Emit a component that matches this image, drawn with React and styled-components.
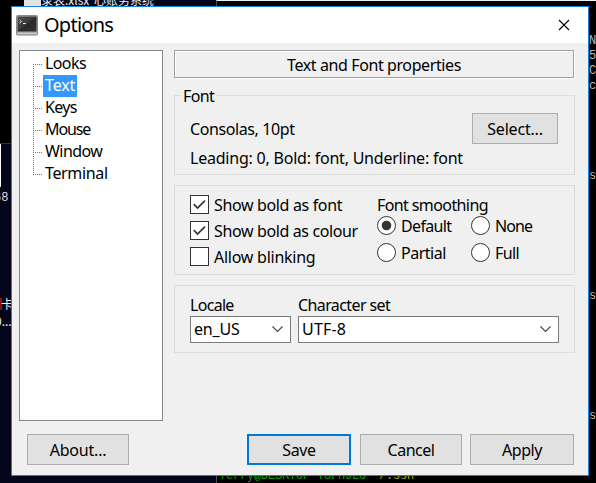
import React from 'react';
import styled, { createGlobalStyle } from 'styled-components';

const GlobalStyle = createGlobalStyle`
  * { box-sizing: border-box; }
  html, body { margin: 0; padding: 0; background: #000; overflow: hidden; }
`;

const Desktop = styled.div`
  position: relative;
  width: 596px;
  height: 483px;
  overflow: hidden;
  background: #000;
  color: #000;
  font: 16px/20px "Noto Sans", "Open Sans", sans-serif;
`;

/* Windows lying behind the dialog */
const BackWindow = styled.div`
  position: absolute;
  left: ${(p) => p.$x}px;
  top: ${(p) => p.$y}px;
  width: ${(p) => p.$w}px;
  height: ${(p) => p.$h}px;
  overflow: hidden;
  background: ${(p) => p.$bg};
  border-left: ${(p) => (p.$edge ? '1px solid #4a4a4a' : '0')};
  border-top: ${(p) => (p.$top ? `1px solid ${p.$top}` : '0')};
`;

const BackText = styled.span`
  position: absolute;
  left: ${(p) => p.$x}px;
  top: ${(p) => p.$y}px;
  white-space: pre;
  color: ${(p) => p.$color || '#b4b4b4'};
  font: ${(p) => p.$size || 12}px/15px ${(p) =>
    p.$cjk ? '"Noto Sans CJK SC", sans-serif' : '"Liberation Mono", monospace'};
  letter-spacing: ${(p) => p.$ls || 0}px;
`;

const Dialog = styled.main`
  position: absolute;
  left: 11px;
  top: 6px;
  width: 578px;
  height: 470px;
  display: flex;
  flex-direction: column;
  background: #f0f0f0;
  border: 1px solid #1883d7;
`;

const TitleBar = styled.header`
  height: 36px;
  flex: none;
  display: flex;
  align-items: center;
  padding: 0 18px 0 4px;
  background: #fff;
`;

const Title = styled.h1`
  flex: 1;
  margin: -1px 0 0 6px;
  font-size: 20px;
  line-height: 26px;
  font-weight: 400;
  letter-spacing: -0.75px;
`;

const CloseButton = styled.button`
  display: flex;
  padding: 0;
  border: 0;
  background: none;
`;

const Body = styled.div`
  display: flex;
  gap: 11px;
  padding: 7px 13px 0 7px;
`;

const Tree = styled.ul`
  width: 144px;
  height: 371px;
  flex: none;
  margin: 0;
  padding: 2px 0 0 13px;
  list-style: none;
  background: #fff;
  border: 1px solid #828790;
`;

const Branch = styled.li`
  display: flex;
  align-items: center;
  height: 22px;
`;

const TreeLines = styled.svg`
  flex: none;
  width: 10px;
  height: 22px;
`;

const Text = styled.span`
  display: inline-block;
  white-space: pre;
  letter-spacing: ${(p) => p.$ls ?? -0.4}px;
`;

const BranchName = styled(Text)`
  height: 22px;
  line-height: 21px;
  padding: 0 2px;
  background: ${(p) => (p.$selected ? '#3399ff' : 'transparent')};
  color: ${(p) => (p.$selected ? '#fff' : '#000')};
`;

const Page = styled.section`
  width: 401px;
  display: flex;
  flex-direction: column;
`;

const PageHeading = styled.h2`
  width: 400px;
  height: 28px;
  margin: 0;
  border: 1px solid #a0a0a0;
  box-shadow: 1px 1px 0 #fff, inset 1px 1px 0 #fff;
  font-size: 16px;
  font-weight: 400;
  line-height: 29px;
  text-align: center;
`;

const Group = styled.fieldset`
  height: ${(p) => p.$h}px;
  min-width: 0;
  margin: ${(p) => p.$gap}px 0 0;
  padding: 0 15px;
  border: 1px solid #dcdcdc;
`;

const FontGroup = styled.section`
  display: flex;
  flex-direction: column;
  height: 89px;
  margin-top: 8px;
`;

const Legend = styled.div`
  display: flex;
  align-items: center;
  height: 20px;
  gap: 2px;
  line-height: 20px;
  &::before, &::after {
    content: '';
    align-self: flex-start;
    height: 11px;
    margin-top: 9px;
    border-top: 1px solid #dcdcdc;
  }
  &::before { width: 6px; border-left: 1px solid #dcdcdc; }
  &::after { flex: 1; border-right: 1px solid #dcdcdc; }
`;

const FontDetails = styled.div`
  flex: 1;
  padding: 7px 16px 0 15px;
  border: 1px solid #dcdcdc;
  border-top: 0;
`;

const FontRow = styled.div`
  display: flex;
  justify-content: space-between;
  align-items: center;
  height: 31px;
  margin-bottom: 4px;
`;

const Button = styled.button`
  width: ${(p) => p.$w}px;
  height: 31px;
  padding: 1px 0 0;
  border: ${(p) => (p.$primary ? '2px solid #0078d7' : '1px solid #adadad')};
  background: #e1e1e1;
  color: #000;
  font: inherit;
  line-height: 20px;
`;

const Columns = styled.div`
  display: grid;
  grid-template-columns: ${(p) => p.$cols};
  column-gap: ${(p) => p.$gap || 0}px;
`;

const Checks = styled.div`
  display: flex;
  flex-direction: column;
  gap: 7px;
  padding-top: 9px;
`;

const Choice = styled.label`
  display: flex;
  align-items: center;
  height: 19px;
  gap: 5px;
`;

const CheckBox = styled.svg`
  width: 19px;
  height: 19px;
  flex: none;
`;

const Smoothing = styled.div`
  padding-top: 9px;
`;

const Radios = styled.div`
  display: grid;
  grid-template-columns: 94px auto;
  row-gap: 8px;
  margin-top: 1px;
`;

const Field = styled.div`
  display: flex;
  flex-direction: column;
  gap: 1px;
  padding-top: 9px;
`;

const Combo = styled.div`
  display: flex;
  align-items: center;
  justify-content: space-between;
  height: 27px;
  padding: 0 6px 1px 3px;
  border: 1px solid #7a7a7a;
  background: #fff;
`;

const Actions = styled.footer`
  display: flex;
  padding: 13px 14px 0 15px;
`;

const Spacer = styled.div`
  width: ${(p) => p.$w}px;
`;

function TerminalIcon() {
  return (
    <svg width="22" height="21" viewBox="0 0 22 21">
      <defs>
        <linearGradient id="screen" x1="0" y1="0" x2="1" y2="1">
          <stop offset="0" stopColor="#505050" />
          <stop offset=".48" stopColor="#393939" />
          <stop offset=".5" stopColor="#292929" />
          <stop offset="1" stopColor="#303030" />
        </linearGradient>
      </defs>
      <rect x=".5" y=".5" width="21" height="19.5" rx="1" fill="#aaa" stroke="#8a8a8a" />
      <rect x="1.5" y="1.5" width="19" height="15" fill="url(#screen)" />
      <path d="M3.5 5l2 1.6-2 1.6M7 8.5h3" fill="none" stroke="#ddd" strokeWidth="1" />
      <path d="M1 18.5h20" stroke="#d0d0d0" />
    </svg>
  );
}

function Check({ label, checked, ls }) {
  return (
    <Choice>
      <CheckBox viewBox="0 0 19 19">
        <rect x=".5" y=".5" width="18" height="18" fill="#fff" stroke="#333" />
        {checked && <path d="M3.8 9.2l3.7 3.8L15 5.6" fill="none" stroke="#333" strokeWidth="1.7" />}
      </CheckBox>
      <Text $ls={ls}>{label}</Text>
    </Choice>
  );
}

function Radio({ label, checked, ls }) {
  return (
    <Choice>
      <CheckBox viewBox="0 0 19 19">
        <circle cx="9.5" cy="9.5" r="9" fill="#fff" stroke="#333" />
        {checked && <circle cx="9.5" cy="9.5" r="4.8" fill="#333" />}
      </CheckBox>
      <Text $ls={ls}>{label}</Text>
    </Choice>
  );
}

function Select({ value, ls }) {
  return (
    <Combo>
      <Text $ls={ls}>{value}</Text>
      <svg width="13" height="8" viewBox="0 0 13 8">
        <path d="M1.5 1.5l5 5 5-5" fill="none" stroke="#444" strokeWidth="1.1" />
      </svg>
    </Combo>
  );
}

const branches = [
  ['Looks', -0.6], ['Text', -0.15], ['Keys', -0.7],
  ['Mouse', -1.1], ['Window', -0.55], ['Terminal', -0.35],
];

export default function App() {
  return (
    <Desktop>
      <GlobalStyle />
      <BackWindow $x={0} $y={143} $w={217} $h={340} $bg="#03051b" $top="#33343d">
        <BackWindow $x={0} $y={0} $w={1} $h={43} $bg="#fff" />
        <BackText $x={-6} $y={47} $color="#ddd">68</BackText>
        <BackWindow $x={0} $y={154} $w={2} $h={12} $bg="#8a1008" />
        <BackText $x={1} $y={152} $color="#eee" $size={12} $cjk>卡</BackText>
        <BackText $x={-5} $y={169} $color="#eee" $size={12} $cjk>0...</BackText>
      </BackWindow>
      <BackWindow $x={24} $y={0} $w={193} $h={6} $bg="#03051b">
        <BackWindow $x={0} $y={0} $w={17} $h={6} $bg="#e2e2e2" />
        <BackText $x={17} $y={-8} $color="#eee" $size={12} $cjk>录表.xlsx</BackText>
        <BackText $x={70} $y={-8} $color="#eee" $size={12} $cjk>心账务系统</BackText>
      </BackWindow>
      <BackWindow $x={216} $y={0} $w={380} $h={483} $bg="#000" $top="#f2f2f2" $edge>
        <BackText $x={372} $y={33}>N</BackText>
        <BackText $x={372} $y={48}>5</BackText>
        <BackText $x={372} $y={63}>C</BackText>
        <BackText $x={372} $y={78}>c</BackText>
        <BackText $x={372} $y={168}>s</BackText>
        <BackText $x={372} $y={288}>s</BackText>
        <BackText $x={372} $y={408}>s</BackText>
        <BackText $x={2} $y={468} $color="#00a800" $ls={-0.2}>Terry@DESKTOP-T8FHJLO</BackText>
        <BackText $x={155} $y={468} $color="#a8a800" $ls={-0.2}>~/.ssh</BackText>
      </BackWindow>

      <Dialog>
        <TitleBar>
          <TerminalIcon />
          <Title>Options</Title>
          <CloseButton aria-label="Close">
            <svg width="12" height="12" viewBox="0 0 12 12">
              <path d="M1 1l10 10M11 1L1 11" stroke="#000" strokeWidth="1.1" />
            </svg>
          </CloseButton>
        </TitleBar>
        <Body>
          <Tree>
            {branches.map(([name, ls], i) => (
              <Branch key={name}>
                <TreeLines viewBox="0 0 10 22">
                  <path
                    d={`M.5 ${i === 0 ? 11 : 1}V${i === branches.length - 1 ? 12 : 22}M0 11.5H9`}
                    fill="none" stroke="#777" strokeDasharray="1 1"
                  />
                </TreeLines>
                <BranchName $selected={name === 'Text'} $ls={ls}>{name}</BranchName>
              </Branch>
            ))}
          </Tree>
          <Page>
            <PageHeading><Text $ls={-0.4}>Text and Font properties</Text></PageHeading>
            <FontGroup>
              <Legend><Text $ls={-0.6}>Font</Text></Legend>
              <FontDetails>
                <FontRow>
                  <Text>Consolas, 10pt</Text>
                  <Button $w={86}><Text $ls={-0.2}>Select...</Text></Button>
                </FontRow>
                <Text $ls={-0.22}>Leading: 0, Bold: font, Underline: font</Text>
              </FontDetails>
            </FontGroup>
            <Group $h={90} $gap={10}>
              <Columns $cols="187px auto">
                <Checks>
                  <Check label="Show bold as font" checked ls={-0.35} />
                  <Check label="Show bold as colour" checked ls={-0.37} />
                  <Check label="Allow blinking" ls={-0.25} />
                </Checks>
                <Smoothing>
                  <Text $ls={-0.6}>Font smoothing</Text>
                  <Radios>
                    <Radio label="Default" checked ls={-0.65} />
                    <Radio label="None" ls={-0.9} />
                    <Radio label="Partial" ls={-0.5} />
                    <Radio label="Full" ls={-0.6} />
                  </Radios>
                </Smoothing>
              </Columns>
            </Group>
            <Group $h={68} $gap={10}>
              <Columns $cols="101px 261px" $gap={7}>
                <Field><Text $ls={-0.7}>Locale</Text><Select value="en_US" ls={-0.15} /></Field>
                <Field><Text $ls={-0.6}>Character set</Text><Select value="UTF-8" ls={0.2} /></Field>
              </Columns>
            </Group>
          </Page>
        </Body>
        <Actions>
          <Button $w={102}><Text $ls={-0.2}>About...</Text></Button>
          <Spacer $w={118} />
          <Button $w={104} $primary><Text>Save</Text></Button>
          <Spacer $w={9} />
          <Button $w={102}><Text $ls={-0.5}>Cancel</Text></Button>
          <Spacer $w={8} />
          <Button $w={104}><Text>Apply</Text></Button>
        </Actions>
      </Dialog>
    </Desktop>
  );
}
